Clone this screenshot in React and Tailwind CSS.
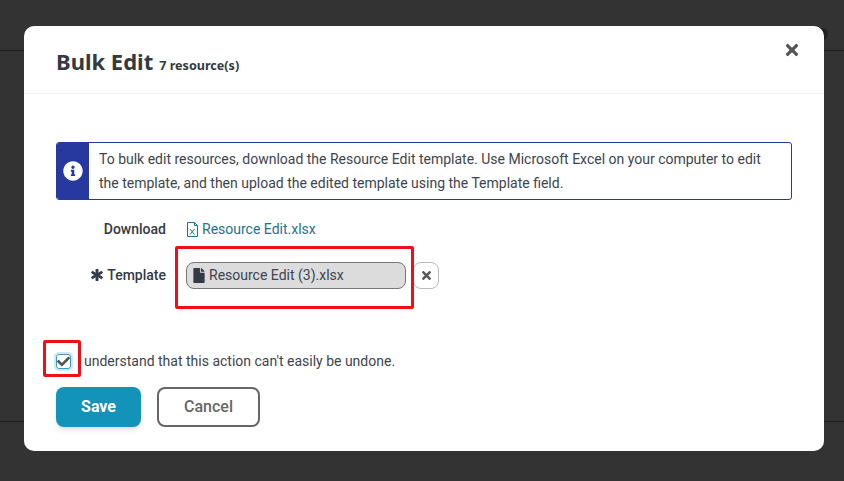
import React from 'react';
import { FaAsterisk, FaCheck, FaFile, FaInfoCircle, FaTimes } from 'react-icons/fa';

function FileXIcon() {
  return (
    <svg width="13" height="15" viewBox="0 0 13 15" fill="none" stroke="#1c7391" strokeWidth="1" className="shrink-0">
      <path d="M1.500 .5h7l3 3v11h-10z" />
      <path d="M8.500 .5v3h3" />
      <path d="M4 7l4.500 5.500M8.500 7L4 12.500" />
    </svg>
  );
}

function Row({ label, children }) {
  return (
    <div className="flex items-center">
      <div className="w-[110px] flex justify-end items-center gap-1 font-medium text-[14px] text-[#333a45]">{label}</div>
      <div className="ml-5 flex items-center">{children}</div>
    </div>
  );
}

export default function App() {
  return (
    <div className="relative w-[844px] h-[481px] overflow-hidden bg-[#333333] font-['Roboto',sans-serif] text-[14px] text-[#3d4450]">
      <div className="h-[51px] border-b border-[#1f1f1f]" />
      <div className="mt-[370px] border-b border-[#1f1f1f]" />
      <div className="absolute left-[816px] top-7 w-3 h-3 rounded-full bg-[#1f1f1f]" />

      <div className="absolute left-6 top-[26px] w-[800px] h-[425px] bg-white rounded-[10px] flex flex-col">
        <div className="relative h-[68px] border-b border-[#f2f2f2] px-8 pt-[18px] flex items-baseline gap-[6px] font-['Noto_Sans',sans-serif] font-bold text-[#333a40]">
          <span className="text-[22px] leading-[34px]">Bulk Edit</span>
          <span className="text-[12.6px]">7 resource(s)</span>
          <button className="absolute right-[23px] top-[15px] text-[#555]">
            <FaTimes size={18} />
          </button>
        </div>

        <div className="px-8 pt-[48px] flex flex-col">
          <div className="h-[58px] flex rounded-[3px] border border-[#27399f] overflow-hidden">
            <div className="w-[32px] bg-[#27399f] flex items-center justify-center shrink-0">
              <FaInfoCircle size={20} className="text-white" />
            </div>
            <p className="pl-[10px] pr-5 leading-6 pt-1">
              To bulk edit resources, download the Resource Edit template. Use Microsoft Excel on your computer to edit the template, and then upload the edited template using the Template field.
            </p>
          </div>

          <div className="mt-[19px] h-6">
            <Row label="Download">
              <a className="flex items-center gap-[3px] text-[#1c7391]">
                <FileXIcon />
                Resource Edit.xlsx
              </a>
            </Row>
          </div>

          <div className="mt-[19px] h-[28px]">
            <Row label={<><FaAsterisk size={12} stroke="currentColor" strokeWidth={40} className="-translate-y-px" /> Template</>}>
              <div className="w-[220px] h-[27px] rounded-[8px] border border-[#777] bg-[#dcdcdc] flex items-center px-[6px] gap-1 text-[#3d4450]">
                <FaFile size={15} className="w-3 shrink-0 text-[#333a45]" />
                Resource Edit (3).xlsx
              </div>
              <button className="ml-[7px] w-[26px] h-[27px] rounded-[8px] border border-[#bbb] flex items-center justify-center text-[#555]">
                <FaTimes size={13} />
              </button>
            </Row>
          </div>

          <div className="mt-[59px] flex items-center h-6">
            <span className="w-[15px] h-[15px] rounded-[3px] border border-[#3a9cba] ring-2 ring-[#cfe8f0] flex items-center justify-center text-[#555]">
              <FaCheck size={13} />
            </span>
            <span className="ml-[13px]">understand that this action can't easily be undone.</span>
          </div>

          <div className="mt-[14px] flex gap-4">
            <button className="w-[85px] h-[40px] rounded-[8px] bg-[#1393b8] text-white font-bold text-[16px] shadow-md">Save</button>
            <button className="w-[103px] h-[40px] rounded-[8px] border-2 border-[#666] text-[#666] font-medium text-[16px]">Cancel</button>
          </div>
        </div>
      </div>

      <div className="absolute left-[175px] top-[246px] w-[239px] h-[63px] border-[3px] border-[#ee0f1b] rounded-[2px]" />
      <div className="absolute left-[43px] top-[340px] w-[38px] h-[37px] border-[3px] border-[#ee0f1b] rounded-[2px]" />
    </div>
  );
}
